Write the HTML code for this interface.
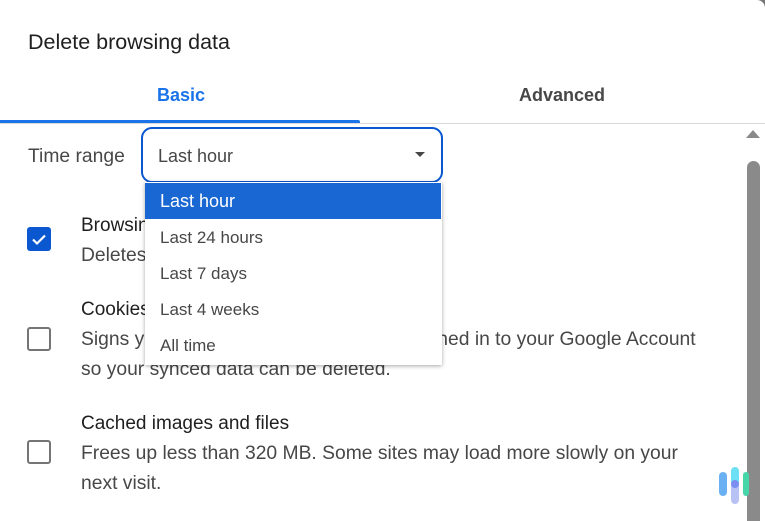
<!DOCTYPE html>
<html><head><meta charset="utf-8"><style>
*{margin:0;padding:0;box-sizing:border-box}
body{width:765px;height:507px;overflow:hidden;background:#fff;font-family:"Liberation Sans",sans-serif;color:#1f1f1f;position:relative}
.a{position:absolute;white-space:nowrap}
.t{font-size:19.3px;color:#474747}
.h{font-size:19px;color:#1f1f1f}
.d{font-size:17px;color:#474747}
</style></head><body>
<div class="a" style="right:0;top:0;width:8px;height:8px;background:#777;"></div>
<div class="a" style="right:0;top:0;width:8px;height:8px;background:#fff;border-top-right-radius:8px;"></div>
<div class="a" style="left:28px;top:30px;font-size:21.5px;color:#1f1f1f">Delete browsing data</div>
<div class="a" style="left:157px;top:85px;font-size:18px;font-weight:bold;color:#1a73e8">Basic</div>
<div class="a" style="left:519px;top:85px;font-size:18px;font-weight:bold;color:#474747">Advanced</div>
<div class="a" style="left:0;top:123px;width:765px;height:1px;background:#dadada"></div>
<div class="a" style="left:0;top:120px;width:360px;height:3px;background:#1a73e8;border-radius:0 2px 0 0"></div>
<div class="a t" style="left:28px;top:146px">Time range</div>
<div class="a" style="left:141px;top:127px;width:302px;height:56px;border:2px solid #0b57d0;border-radius:11px"></div>
<div class="a t" style="left:158px;top:146px;font-size:18px">Last hour</div>
<div class="a" style="left:415px;top:152px;width:0;height:0;border-left:5px solid transparent;border-right:5px solid transparent;border-top:5px solid #474747"></div>
<div class="a" style="left:746px;top:130px;width:0;height:0;border-left:7px solid transparent;border-right:7px solid transparent;border-bottom:8px solid #8a8a8a"></div>
<div class="a" style="left:747px;top:161px;width:13px;height:360px;background:#8a8a8a;border-radius:7px 7px 0 0"></div>
<div class="a" style="left:27px;top:227px;width:24px;height:24px;background:#0b57d0;border-radius:3px"></div>
<svg class="a" style="left:27px;top:227px" width="24" height="24"><path d="M6 12.5l4 4 8-8" stroke="#fff" stroke-width="2.2" fill="none"/></svg>
<div class="a" style="left:27px;top:327px;width:24px;height:24px;border:2.5px solid #757575;border-radius:3px"></div>
<div class="a" style="left:27px;top:440px;width:24px;height:24px;border:2.5px solid #757575;border-radius:3px"></div>
<div class="a h" style="left:81px;top:215px">Browsing history</div>
<div class="a t" style="left:81px;top:245px">Deletes history from all synced devices</div>
<div class="a h" style="left:81px;top:299px">Cookies and other site data</div>
<div class="a t" style="left:81px;top:329px">Signs you out of most sites. You'll stay signed in to your Google Account</div>
<div class="a t" style="left:81px;top:359px">so your synced data can be deleted.</div>
<div class="a h" style="left:81px;top:413px">Cached images and files</div>
<div class="a t" style="left:81px;top:443px">Frees up less than 320 MB. Some sites may load more slowly on your</div>
<div class="a t" style="left:81px;top:473px">next visit.</div>
<div class="a" style="left:145px;top:182px;width:297px;height:183px;background:#fff;box-shadow:0 1px 4px rgba(0,0,0,.35)"></div>
<div class="a" style="left:145px;top:183px;width:296px;height:36px;background:#1967d2"></div>
<div class="a" style="left:160px;top:191px;font-size:18px;color:#fff">Last hour</div>
<div class="a d" style="left:160px;top:228px">Last 24 hours</div>
<div class="a d" style="left:160px;top:264px">Last 7 days</div>
<div class="a d" style="left:160px;top:300px">Last 4 weeks</div>
<div class="a d" style="left:160px;top:336px">All time</div>
<div class="a" style="left:719px;top:472px;width:8px;height:24px;background:#6ab0f3;border-radius:4px"></div>
<div class="a" style="left:731px;top:467px;width:8px;height:20px;background:#6de0f5;border-radius:4px 4px 0 0"></div>
<div class="a" style="left:731px;top:482px;width:8px;height:22px;background:#b8c2f5;border-radius:0 0 4px 4px"></div>
<div class="a" style="left:731px;top:480px;width:8px;height:8px;background:#7a8ff0;border-radius:50%"></div>
<div class="a" style="left:743px;top:472px;width:6px;height:24px;background:#46d6a8;border-radius:4px"></div>
</body></html>
